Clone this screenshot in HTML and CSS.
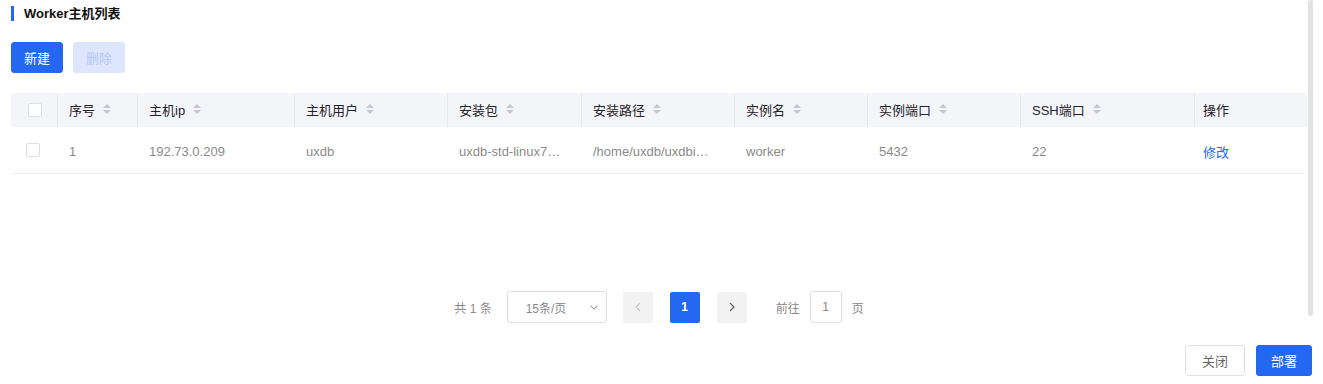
FILE: index.html
```html
<!DOCTYPE html>
<html lang="zh-CN">
<head>
<meta charset="utf-8">
<title>Worker主机列表</title>
<link rel="stylesheet" href="styles.css">
</head>
<body>
<div class="dialog">
  <div class="body-row">
    <div class="content">
      <h2 class="title">Worker主机列表</h2>
      <div class="toolbar">
        <button class="btn btn-primary">新建</button>
        <button class="btn btn-disabled">删除</button>
      </div>
      <div class="table">
        <div class="tr thead">
          <div class="th th-check"><span class="checkbox"></span></div>
          <div class="th">序号<svg class="sort" viewBox="0 0 10 10"><path d="M5 0L9 4H1Z M5 10L1 6H9Z"/></svg></div>
          <div class="th">主机ip<svg class="sort" viewBox="0 0 10 10"><path d="M5 0L9 4H1Z M5 10L1 6H9Z"/></svg></div>
          <div class="th">主机用户<svg class="sort" viewBox="0 0 10 10"><path d="M5 0L9 4H1Z M5 10L1 6H9Z"/></svg></div>
          <div class="th">安装包<svg class="sort" viewBox="0 0 10 10"><path d="M5 0L9 4H1Z M5 10L1 6H9Z"/></svg></div>
          <div class="th">安装路径<svg class="sort" viewBox="0 0 10 10"><path d="M5 0L9 4H1Z M5 10L1 6H9Z"/></svg></div>
          <div class="th">实例名<svg class="sort" viewBox="0 0 10 10"><path d="M5 0L9 4H1Z M5 10L1 6H9Z"/></svg></div>
          <div class="th">实例端口<svg class="sort" viewBox="0 0 10 10"><path d="M5 0L9 4H1Z M5 10L1 6H9Z"/></svg></div>
          <div class="th">SSH端口<svg class="sort" viewBox="0 0 10 10"><path d="M5 0L9 4H1Z M5 10L1 6H9Z"/></svg></div>
          <div class="th th-last">操作</div>
        </div>
        <div class="tr tbody">
          <div class="td td-check"><span class="checkbox"></span></div>
          <div class="td">1</div>
          <div class="td">192.73.0.209</div>
          <div class="td">uxdb</div>
          <div class="td">uxdb-std-linux7…</div>
          <div class="td">/home/uxdb/uxdbi…</div>
          <div class="td">worker</div>
          <div class="td">5432</div>
          <div class="td">22</div>
          <div class="td"><a class="link">修改</a></div>
        </div>
      </div>
      <div class="pager">
        <span class="total">共 1 条</span>
        <div class="select"><span>15条/页</span><svg class="chev" viewBox="0 0 10 6"><path d="M1 1L5 5L9 1"/></svg></div>
        <button class="pbtn pbtn-disabled"><svg viewBox="0 0 6 10"><path d="M5 1L1 5L5 9"/></svg></button>
        <button class="pnum active">1</button>
        <button class="pbtn"><svg viewBox="0 0 6 10"><path d="M1 1L5 5L1 9"/></svg></button>
        <span class="jump">前往</span>
        <span class="jump-input">1</span>
        <span class="jump-unit">页</span>
      </div>
    </div>
    <div class="scrollbar"></div>
  </div>
  <div class="footer">
    <button class="btn btn-default">关闭</button>
    <button class="btn btn-primary btn-deploy">部署</button>
  </div>
</div>
</body>
</html>
```

FILE: styles.css
```css
* { box-sizing: border-box; }
html, body { margin: 0; background: #fff; }
body {
  font-family: "Liberation Sans", Arial, "Noto Sans CJK SC", sans-serif;
  font-size: 13px;
  color: #1f2329;
}
.dialog { width: 1323px; height: 384px; display: flex; flex-direction: column; }
.body-row { display: flex; height: 330px; }
.content { flex: 1; padding-left: 11px; display: flex; flex-direction: column; }
.scrollbar {
  width: 5px; height: 316px; margin-left: 1px; margin-right: 10px;
  background: #e2e2e2; border-radius: 3px;
}
.title {
  margin: 6px 0 0 0; height: 15px; line-height: 15px;
  font-size: 13px; font-weight: bold; color: #111;
  border-left: 3px solid #2468f2; padding-left: 10px;
}
.toolbar { display: flex; gap: 10px; margin-top: 21px; }
.btn {
  font-family: inherit; font-size: 13px; height: 31px; border-radius: 3px;
  border: 1px solid transparent; padding: 0; cursor: pointer;
}
.toolbar .btn { width: 52px; }
.btn-primary { background: #2468f2; color: #fff; border-color: #2468f2; }
.btn-disabled { background: #dde6fd; color: #b4c7f9; border-color: #dde6fd; }
.btn-default { background: #fff; color: #666; border-color: #dcdfe6; width: 60px; }
.btn-deploy { width: 56px; }

.table { margin-top: 20px; width: 1296px; }
.tr {
  display: grid;
  grid-template-columns: 47px 80px 157px 153px 134px 153px 133px 153px 174px 112px;
}
.thead { background: #f4f5f9; height: 34px; border-radius: 0 5px 0 0; }
.th {
  display: flex; align-items: center; padding-left: 11px; padding-bottom: 2px;
  color: #1f2329; border-right: 1px solid #e6e8ef; white-space: nowrap;
}
.th-last { border-right: none; padding-left: 8px; }
.th-check { padding-left: 17px; padding-bottom: 0; }
.sort { width: 10px; height: 10px; margin-left: 7px; fill: #c4c8d0; }
.tbody { height: 47px; border-bottom: 1px solid #eceef2; margin-right: 4px; }
.td {
  display: flex; align-items: center; padding-left: 11px; padding-top: 2px; color: #8a8a8a;
  white-space: nowrap;
}
.td:last-child { padding-left: 8px; }
.td-check { padding-left: 15px; padding-top: 0; }
.checkbox {
  width: 14px; height: 14px; border: 1px solid #dcdfe6; border-radius: 2px; background: #fff;
  display: inline-block;
}
.link { color: #2468f2; }

.pager {
  margin-top: 117px; display: flex; align-items: center; justify-content: center;
  font-size: 12px; color: #888; height: 32px;
}
.total { margin-right: 15px; }
.select {
  width: 100px; height: 32px; border: 1px solid #dcdfe6; border-radius: 3px;
  display: flex; align-items: center; justify-content: space-between;
  padding: 0 8px 0 18px; color: #888; font-size: 12px;
}
.chev { width: 8px; height: 5px; fill: none; stroke: #999; stroke-width: 1.3; }
.pbtn, .pnum {
  width: 30px; height: 31px; border: none; border-radius: 2px; padding: 0;
  display: flex; align-items: center; justify-content: center; font-family: inherit;
}
.pbtn { background: #f2f2f2; }
.pbtn svg { width: 6px; height: 10px; fill: none; stroke: #666; stroke-width: 1.3; }
.pbtn-disabled svg { stroke: #c8c8c8; }
.select + .pbtn { margin-left: 16px; }
.pnum { margin: 0 17px; background: #2468f2; color: #fff; font-weight: bold; font-size: 12px; }
.jump { margin-left: 29px; }
.jump-input {
  margin-left: 10px; width: 32px; height: 32px; border: 1px solid #dcdfe6; border-radius: 3px;
  display: flex; align-items: center; justify-content: center; color: #888;
}
.jump-unit { margin-left: 10px; }

.footer {
  display: flex; justify-content: flex-end; gap: 11px; padding-right: 11px; margin-top: 15px;
}
```
